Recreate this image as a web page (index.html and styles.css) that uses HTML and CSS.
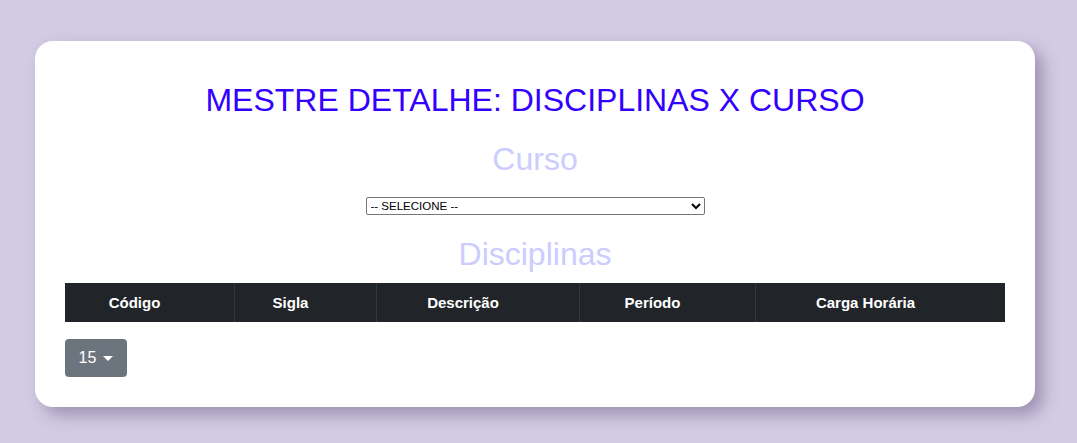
FILE: index.html
```html
<!DOCTYPE html>
<html lang="pt">
<head>
<meta charset="utf-8">
<title>Mestre Detalhe</title>
<link rel="stylesheet" href="styles.css">
</head>
<body>
<div class="card">
  <h1 class="title">MESTRE DETALHE: DISCIPLINAS X CURSO</h1>
  <h2 class="subtitle">Curso</h2>
  <div class="select-row">
    <select class="curso-select">
      <option>-- SELECIONE --</option>
    </select>
  </div>
  <h2 class="subtitle subtitle-2">Disciplinas</h2>
  <table class="grid">
    <thead>
      <tr>
        <th class="c1"><div class="th-inner">Código</div></th>
        <th class="c2"><div class="th-inner">Sigla</div></th>
        <th class="c3"><div class="th-inner">Descrição</div></th>
        <th class="c4"><div class="th-inner">Período</div></th>
        <th class="c5"><div class="th-inner">Carga Horária</div></th>
      </tr>
    </thead>
  </table>
  <div class="pager">
    <button class="page-size">15 <span class="caret"></span></button>
  </div>
</div>
</body>
</html>
```

FILE: styles.css
```css
html, body {
  margin: 0;
  padding: 0;
}
body {
  background: #d3cbe3;
  font-family: "Liberation Sans", Arial, sans-serif;
  padding: 41px 0 0 35px;
  height: 443px;
  box-sizing: border-box;
  overflow: hidden;
}
.card {
  width: 1000px;
  box-sizing: border-box;
  background: #fff;
  border-radius: 18px;
  padding: 30px;
  box-shadow: 8px 8px 16px rgba(60, 40, 90, 0.35);
  display: flex;
  flex-direction: column;
}
.title {
  margin: 10px 0 0;
  font-size: 32px;
  font-weight: normal;
  line-height: 38px;
  color: #3300ff;
  text-align: center;
}
.subtitle {
  margin: 21px 0 0;
  font-size: 32px;
  font-weight: normal;
  line-height: 38px;
  color: #ccccff;
  text-align: center;
}
.subtitle-2 {
  margin-top: 20px;
}
.select-row {
  display: flex;
  justify-content: center;
  margin-top: 19px;
}
.curso-select {
  width: 339px;
  height: 18px;
  font-family: "Liberation Sans", Arial, sans-serif;
  font-size: 11.5px;
  padding: 0;
  border: 1px solid #767676;
  border-radius: 2px;
  background: #fff;
  color: #000;
}
.grid {
  margin-top: 10px;
  width: 940px;
  border-collapse: collapse;
  table-layout: fixed;
}
.grid th {
  background: #212529;
  color: #fff;
  font-size: 15px;
  font-weight: bold;
  height: 39px;
  padding: 0;
  border-left: 1px solid #32383e;
  text-align: center;
}
.grid th:first-child {
  border-left: none;
}
.th-inner {
  padding-right: 30px;
}
.c1 { width: 169px; }
.c2 { width: 141px; }
.c3 { width: 202px; }
.c4 { width: 175px; }
.c5 { width: 249px; }
.pager {
  margin-top: 17px;
  display: flex;
}
.page-size {
  width: 62px;
  height: 38px;
  background: #6c757d;
  color: #fff;
  border: none;
  border-radius: 4px;
  font-family: "Liberation Sans", Arial, sans-serif;
  font-size: 16px;
  display: flex;
  align-items: center;
  justify-content: center;
  gap: 7px;
  padding: 0;
}
.caret {
  width: 0;
  height: 0;
  border-left: 5px solid transparent;
  border-right: 5px solid transparent;
  border-top: 5px solid #fff;
}
```
